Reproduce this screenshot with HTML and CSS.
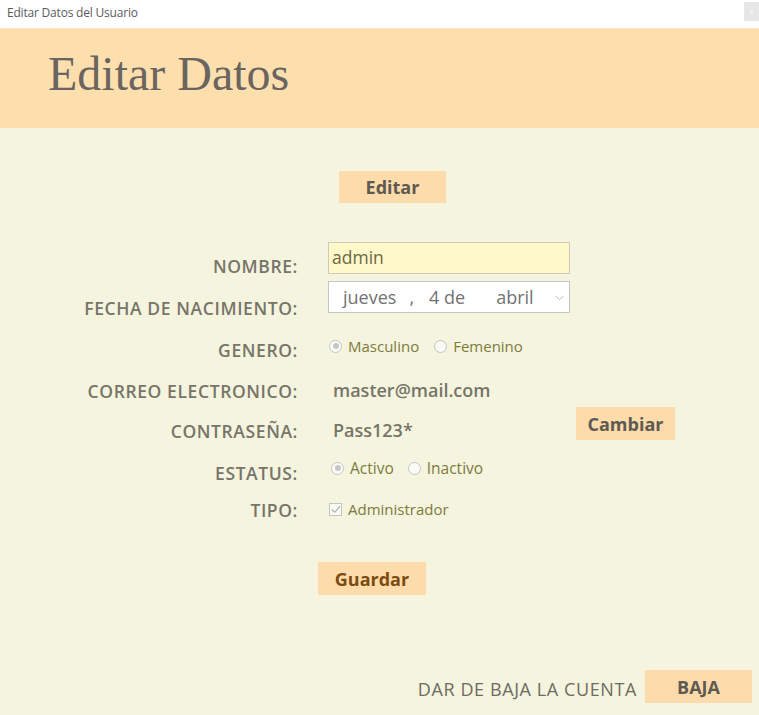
FILE: index.html
```html
<!DOCTYPE html>
<html lang="es">
<head>
<meta charset="utf-8">
<title>Editar Datos del Usuario</title>
<link rel="stylesheet" href="styles.css">
</head>
<body>
<div class="titlebar">
  <span class="wtitle">Editar Datos del Usuario</span>
  <span class="wbtn"><span class="wbtn-mark"></span></span>
</div>
<header class="banner"><h1 class="banner-title">Editar Datos</h1></header>
<main class="content">
  <div class="edit-row"><button class="btn btn-edit">Editar</button></div>

  <div class="form">
    <div class="lbl">NOMBRE:</div>
    <div class="ctl c-name"><div class="txt">admin</div></div>

    <div class="lbl">FECHA DE NACIMIENTO:</div>
    <div class="ctl c-date">
      <div class="date">
        <span class="d-day">jueves</span><span class="d-comma">,</span><span class="d-num">4 de</span><span class="d-mon">abril</span>
        <svg class="chev" width="9" height="6" viewBox="0 0 9 6"><path d="M0.5 0.8 L4.5 4.8 L8.5 0.8" fill="none" stroke="#bdbdbd" stroke-width="1"/></svg>
      </div>
    </div>

    <div class="lbl">GENERO:</div>
    <div class="ctl c-gen">
      <span class="opt"><span class="radio on"></span>Masculino</span>
      <span class="opt opt2"><span class="radio"></span>Femenino</span>
    </div>

    <div class="lbl">CORREO ELECTRONICO:</div>
    <div class="ctl c-mail"><span class="val">master@mail.com</span></div>

    <div class="lbl">CONTRASEÑA:</div>
    <div class="ctl c-pass">
      <span class="val pass">Pass123*</span>
      <button class="btn btn-cambiar">Cambiar</button>
    </div>

    <div class="lbl">ESTATUS:</div>
    <div class="ctl c-stat">
      <span class="opt opt-big"><span class="radio on"></span>Activo</span>
      <span class="opt opt-big opt3"><span class="radio"></span>Inactivo</span>
    </div>

    <div class="lbl">TIPO:</div>
    <div class="ctl c-tipo">
      <span class="opt"><span class="check"><svg width="10" height="9" viewBox="0 0 10 9"><path d="M1 4.5 L3.8 7.3 L9 1.2" fill="none" stroke="#a8a8a8" stroke-width="1.1"/></svg></span>Administrador</span>
    </div>
  </div>

  <div class="save-row"><button class="btn btn-save">Guardar</button></div>

  <div class="bottom-row">
    <span class="baja-lbl">DAR DE BAJA LA CUENTA</span>
    <button class="btn btn-baja">BAJA</button>
  </div>
</main>
</body>
</html>
```

FILE: styles.css
```css
html, body {
  margin: 0;
  padding: 0;
}
body {
  width: 759px;
  height: 715px;
  overflow: hidden;
  background: #f5f4de;
  font-family: "Open Sans", "Noto Sans", sans-serif;
}
.titlebar {
  height: 28px;
  background: #ffffff;
  display: flex;
  align-items: center;
  justify-content: space-between;
}
.wtitle {
  font-size: 12px;
  color: #5c5c5c;
  margin-left: 7px;
  margin-top: -3px;
  letter-spacing: -0.2px;
}
.wbtn {
  width: 15px;
  height: 19px;
  background: #e6e6e6;
  margin-top: -5px;
  display: flex;
  align-items: center;
  justify-content: center;
}
.wbtn-mark {
  width: 3px;
  height: 5px;
  background: #efefef;
}
.banner {
  height: 100px;
  background: #fddfae;
  border-top: 1px solid #fbe7c4;
  box-sizing: border-box;
}
.banner-title {
  margin: 0;
  padding: 17px 0 0 48px;
  font-family: "Liberation Serif", "Times New Roman", serif;
  font-weight: normal;
  font-size: 48px;
  line-height: 56px;
  color: #6a6560;
}
.content {
  display: flex;
  flex-direction: column;
}
.btn {
  border: none;
  background: #fddbab;
  font-family: "Open Sans", "Noto Sans", sans-serif;
  font-weight: 700;
  font-size: 18px;
  color: #5e5a52;
  padding: 0;
  cursor: pointer;
}
.edit-row {
  margin-top: 43px;
  padding-left: 339px;
}
.btn-edit {
  width: 107px;
  height: 32px;
}
.form {
  margin-top: 42px;
  display: grid;
  grid-template-columns: 298px 431px;
  column-gap: 30px;
  grid-template-rows: 42px 42px 42px 40px 40px 44px 30px;
  align-items: center;
}
.lbl {
  text-align: right;
  white-space: nowrap;
  font-size: 17.5px;
  letter-spacing: 0.6px;
  font-weight: 600;
  color: #77746a;
  line-height: 20px;
}
.ctl {
  display: flex;
  align-items: center;
}
.c-name { margin-bottom: 16px; }
.c-date { margin-bottom: 22px; }
.c-gen { margin-bottom: 8px; }
.c-mail { margin-bottom: 2px; }
.c-pass { margin-bottom: 2px; }
.c-stat { margin-bottom: 10px; }
.c-tipo { margin-bottom: 2px; }

.txt {
  width: 242px;
  height: 32px;
  box-sizing: border-box;
  border: 1px solid #cfcbb6;
  background: #fef8cb;
  font-size: 17.5px;
  color: #6a6744;
  padding-left: 3px;
  line-height: 28px;
}
.date {
  position: relative;
  width: 242px;
  height: 32px;
  box-sizing: border-box;
  border: 1px solid #c6c6c2;
  background: #ffffff;
  font-size: 18px;
  color: #727272;
  line-height: 28px;
  display: flex;
  align-items: center;
}
.d-day { margin-left: 14px; }
.d-comma { margin-left: 13px; }
.d-num { margin-left: 15px; }
.d-mon { margin-left: 31px; }
.chev {
  position: absolute;
  right: 5px;
  top: 13px;
}
.opt {
  display: flex;
  align-items: center;
  font-size: 15px;
  color: #7c7b3c;
  margin-left: 1px;
}
.opt2 { margin-left: 15px; }
.opt-big {
  font-size: 15.5px;
  margin-left: 3px;
}
.opt3 { margin-left: 14px; }
.radio {
  width: 11px;
  height: 11px;
  border: 1px solid #c4c4c4;
  border-radius: 50%;
  background: #fbfbf6;
  margin-right: 6px;
  display: flex;
  align-items: center;
  justify-content: center;
}
.radio.on::after {
  content: "";
  width: 6px;
  height: 6px;
  border-radius: 50%;
  background: #c6c6c6;
}
.check {
  width: 11px;
  height: 11px;
  border: 1px solid #c4c4c4;
  background: #fbfbf6;
  margin-right: 6px;
  display: flex;
  align-items: center;
  justify-content: center;
}
.val {
  font-size: 18px;
  font-weight: 600;
  color: #77746a;
  padding-left: 5px;
}
.pass {
  width: 243px;
}
.btn-cambiar {
  width: 99px;
  height: 33px;
  margin-bottom: 13px;
}
.save-row {
  margin-top: 37px;
  padding-left: 318px;
}
.btn-save {
  width: 108px;
  height: 33px;
  color: #7b4b10;
}
.bottom-row {
  margin-top: 75px;
  display: flex;
  justify-content: flex-end;
  align-items: center;
  padding-right: 7px;
}
.baja-lbl {
  font-size: 18px;
  letter-spacing: 0.6px;
  color: #6e6b62;
  margin-right: 8px;
  margin-top: 4px;
}
.btn-baja {
  width: 107px;
  height: 33px;
}
```
